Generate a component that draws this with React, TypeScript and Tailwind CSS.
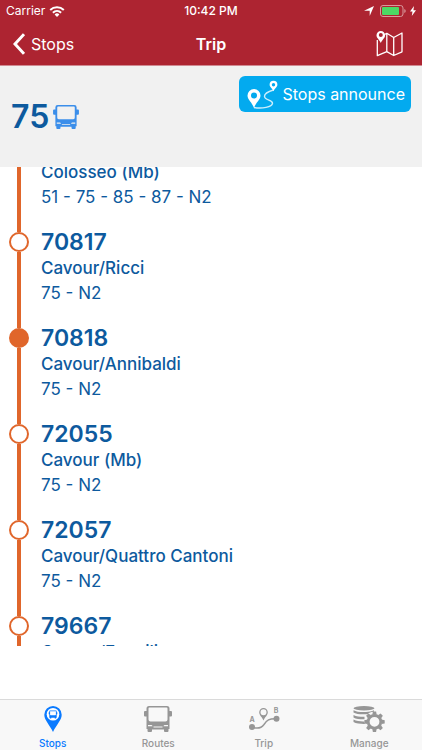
import { clsx } from "clsx";

const stops = [
  { name: "Colosseo (Mb)", lines: "51 - 75 - 85 - 87 - N2" },
  { code: "70817", name: "Cavour/Ricci", lines: "75 - N2" },
  { code: "70818", name: "Cavour/Annibaldi", lines: "75 - N2", current: true },
  { code: "72055", name: "Cavour (Mb)", lines: "75 - N2" },
  { code: "72057", name: "Cavour/Quattro Cantoni", lines: "75 - N2" },
  { code: "79667", name: "Cavour/Esquilino", lines: "75 - N2" },
];

const tabs = [
  { label: "Stops", Icon: StopsIcon, active: true },
  { label: "Routes", Icon: BusIcon },
  { label: "Trip", Icon: TripIcon },
  { label: "Manage", Icon: ManageIcon },
];

function BusIcon({ className = "h-[26px] w-7" }: { className?: string }) {
  return (
    <svg viewBox="0 0 28 26" className={className} fill="currentColor" aria-hidden="true">
      <path
        fillRule="evenodd"
        d="M5 0h18a2.500 2.500 0 0 1 2.500 2.500V5H27a1 1 0 0 1 1 1v3.500a1 1 0 0 1-1 1h-1.500V23H24.500v2a1 1 0 0 1-1 1h-2.500a1 1 0 0 1-1-1v-1.500H8V25a1 1 0 0 1-1 1H4.500a1 1 0 0 1-1-1v-2h-1V10.500H1a1 1 0 0 1-1-1V6a1 1 0 0 1 1-1h1.500V2.500A2.500 2.500 0 0 1 5 0ZM5.500 1.600a1 1 0 0 0-1 1V13.500a2 2 0 0 0 2 2h15a2 2 0 0 0 2-2V2.600a1 1 0 0 0-1-1ZM4 19v1.300h4.500c0-.8-.8-1.300-2-1.300Zm20 0v1.300h-4.500c0-.8.8-1.300 2-1.300ZM9.500 20.600v.9h9v-.9Z"
      />
    </svg>
  );
}

function StopsIcon() {
  return (
    <svg viewBox="0 0 18 26" className="h-[26px] w-[18px]" aria-hidden="true">
      <path fill="currentColor" d="M9 0a8.700 8.700 0 0 0-8.700 8.700C.3 14 5.500 18.500 9 26c3.500-7.500 8.700-12 8.700-17.300A8.700 8.700 0 0 0 9 0Z" />
      <circle cx="9" cy="8.300" r="6.300" fill="#fff" />
      <path
        fill="currentColor"
        fillRule="evenodd"
        d="M6 4.500h6q.7 0 .7.700v1h.6v2h-.6v3.500h-.6v.8h-1.400v-.8H7.300v.8H5.900v-.8h-.6V8.200h-.6v-2h.6v-1q0-.7.7-.7Zm.1.700v3.400q0 .6.600.6h4.600q.6 0 .6-.6V5.200Z"
      />
    </svg>
  );
}

function TripIcon() {
  return (
    <svg viewBox="0 0 32 26" className="h-[26px] w-8" aria-hidden="true">
      <path d="M4 21c5 2 9 1.500 12-2.500 3-4.300 5-6 12-5.800" fill="none" stroke="currentColor" strokeWidth="1.500" />
      <circle cx="4" cy="21" r="3" fill="currentColor" />
      <circle cx="28.500" cy="12.700" r="3" fill="currentColor" />
      <path
        fill="currentColor"
        fillRule="evenodd"
        d="M15.500 2a4.300 4.300 0 0 0-4.300 4.300c0 3 2.800 4.700 4.300 8.200 1.500-3.500 4.300-5.200 4.300-8.200A4.300 4.300 0 0 0 15.500 2Zm0 1.300a3 3 0 1 1 0 6 3 3 0 0 1 0-6Z"
      />
      <text x="4" y="16" textAnchor="middle" fontSize="7" fontWeight="700" fill="currentColor">A</text>
      <text x="28" y="7" textAnchor="middle" fontSize="7" fontWeight="700" fill="currentColor">B</text>
    </svg>
  );
}

function ManageIcon() {
  return (
    <svg viewBox="0 0 32 26" className="h-[26px] w-8" fill="currentColor" aria-hidden="true">
      <ellipse cx="11" cy="2.200" rx="10.500" ry="2.200" />
      <path d="M.5 4.200c3 1.700 8 2 12.500 1.700 3-.1 5.500-.6 8-1.600v1.400c-3-.1-5 .8-6.500 2.500C9 8.600 3 8.300.5 6.500Z" />
      <path d="M.5 8.900c3 1.500 7 2 11 1.900v2.500c-4 .1-8.500-.4-11-1.900Z" />
      <path d="M.5 13.600c3 1.500 7 2 10.500 1.900l1 2.500c-4 .1-9-.4-11.500-1.900Z" />
      <g transform="translate(21.500 15.800)">
        <circle r="6.300" fill="none" stroke="currentColor" strokeWidth="2.800" />
        {[0, 45, 90, 135, 180, 225, 270, 315].map((angle) => (
          <path key={angle} d="M-2.200-7 -1.600-10.200H1.600L2.200-7Z" transform={`rotate(${angle})`} />
        ))}
      </g>
    </svg>
  );
}

function WifiIcon() {
  return (
    <svg viewBox="0 0 16 11" className="h-[11px] w-4" aria-hidden="true">
      <g fill="none" stroke="currentColor" strokeWidth="2">
        <path d="M1.200 4a9.800 9.800 0 0 1 13.600 0" />
        <path d="M3.900 6.700a6 6 0 0 1 8.200 0" />
      </g>
      <path d="M8 11 5.600 8.500a3.400 3.400 0 0 1 4.800 0Z" fill="currentColor" />
    </svg>
  );
}

function MapIcon() {
  return (
    <svg viewBox="0 0 27 26" className="h-[26px] w-[27px]" fill="none" aria-hidden="true">
      <path
        d="M8.500 3.500 10.800 2.300l6.900 4.200L26 2v18.800l-8.300 3.700-6.900-3.900-9.500 4.100V9M10.800 2.300v18.300M17.700 6.500v18"
        stroke="currentColor"
        strokeWidth="1.300"
        strokeLinejoin="round"
      />
      <path
        fill="currentColor"
        fillRule="evenodd"
        d="M4.800 0A4.300 4.300 0 0 0 .5 4.300c0 2.800 2.800 4.200 4.300 7.700 1.500-3.500 4.300-4.900 4.300-7.700A4.300 4.300 0 0 0 4.800 0Zm0 2.100a2 2 0 1 1 0 4 2 2 0 0 1 0-4Z"
      />
    </svg>
  );
}

function AnnounceIcon() {
  return (
    <svg viewBox="0 0 31 29" className="h-[29px] w-[31px]" aria-hidden="true">
      <path
        d="M7 27.500c8 1.500 18-.5 18.500-4.200.4-3.600-8-2.600-8-7 0-3.300 4.500-5 9-6.300"
        fill="none"
        stroke="currentColor"
        strokeWidth="1.400"
        opacity=".8"
      />
      <path
        fill="currentColor"
        fillRule="evenodd"
        d="M7 9a6.500 6.500 0 0 0-6.500 6.500C.5 20 5 22 7 28c2-6 6.500-8 6.500-12.500A6.500 6.500 0 0 0 7 9Zm0 3.500a3 3 0 1 1 0 6 3 3 0 0 1 0-6Z"
      />
      <path
        fill="currentColor"
        fillRule="evenodd"
        d="M26.500.8a3.900 3.900 0 0 0-3.900 3.900c0 2.500 2.700 3.300 3.900 6.500 1.200-3.200 3.900-4 3.900-6.500A3.900 3.900 0 0 0 26.500.8Zm0 2.200a1.700 1.700 0 1 1 0 3.400 1.700 1.700 0 0 1 0-3.400Z"
      />
    </svg>
  );
}

function StatusBar() {
  return (
    <div className="grid h-[22px] grid-cols-3 items-center px-1.5 text-xs">
      <div className="flex items-center gap-1">
        <span>Carrier</span>
        <WifiIcon />
      </div>
      <span className="text-center font-medium">10:42 PM</span>
      <div className="flex items-center justify-end gap-1.5">
        <svg viewBox="0 0 10 10" className="size-2.5" fill="currentColor" aria-hidden="true">
          <path d="M10 0 5.700 10V4.700H0Z" />
        </svg>
        <div className="flex items-center gap-1">
          <svg viewBox="0 0 26 12" className="h-3 w-[26px]" aria-hidden="true">
            <rect x=".5" y=".5" width="22.500" height="11" rx="2.500" fill="none" stroke="#d99a9d" />
            <rect x="2" y="2" width="17" height="8" rx="1" fill="#4cd964" />
            <path d="M24.300 4v4q1.400-.7 1.400-2t-1.400-2Z" fill="#d99a9d" />
          </svg>
          <svg viewBox="0 0 6 10" className="h-2.5 w-1.5" fill="currentColor" aria-hidden="true">
            <path d="M4 0 0 5.600h2.500L1.800 10 6 4.200H3.400Z" />
          </svg>
        </div>
      </div>
    </div>
  );
}

export default function App() {
  return (
    <div className="flex h-screen flex-col bg-white font-['Inter',sans-serif]">
      <header className="border-b border-[#d08a92] bg-[#ad2431] text-white">
        <StatusBar />
        <div className="grid h-[43px] grid-cols-3 items-center px-[13px]">
          <a href="#stops" className="flex items-center gap-1.5 text-base">
            <svg viewBox="0 0 12 22" className="h-[22px] w-3" fill="none" stroke="currentColor" strokeWidth="3" aria-hidden="true">
              <path d="M11 1.200 2 11l9 9.800" />
            </svg>
            Stops
          </a>
          <h1 className="text-center text-base font-semibold">Trip</h1>
          <button aria-label="Map" className="justify-self-end pr-1.5">
            <MapIcon />
          </button>
        </div>
      </header>

      <section className="flex h-[101px] shrink-0 items-start justify-between bg-[#f1f1f1] px-[11px]">
        <h2 className="mt-[31px] flex items-center gap-1 text-[32px] leading-10 font-semibold text-[#0d5a9e]">
          75
          <BusIcon className="h-6 w-[26px] text-[#3b8eea]" />
        </h2>
        <button className="mt-[10px] flex h-9 items-center gap-1 rounded-md bg-[#03aaef] pr-1.5 pl-2 text-base text-white">
          <AnnounceIcon />
          Stops announce
        </button>
      </section>

      <main className="mb-[53px] min-h-0 flex-1 overflow-hidden text-[#0d5a9e]">
        <ol className="-mt-[35px]">
          {stops.map((stop) => (
            <li key={stop.name} className="flex h-24 gap-3 pl-[9px]">
              <div className="flex w-5 flex-col items-center">
                <div className="h-1 w-1 bg-[#e0662b]" />
                <div
                  className={clsx(
                    "size-5 rounded-full border-2 border-[#e0662b]",
                    stop.current && "bg-[#e0662b]"
                  )}
                />
                <div className="w-1 flex-1 bg-[#e0662b]" />
              </div>
              <div className="self-end pb-[18px]">
                {stop.code && (
                  <h3 className="text-[23px] leading-7 font-semibold">{stop.code}</h3>
                )}
                <p className="text-[17px] leading-6 font-medium">{stop.name}</p>
                <p className="text-[17px] leading-[26px]">{stop.lines}</p>
              </div>
            </li>
          ))}
        </ol>
      </main>

      <nav className="grid h-[51px] shrink-0 grid-cols-4 border-t border-[#dadada] bg-[#f8f8f8]">
        {tabs.map(({ label, Icon, active }) => (
          <a
            key={label}
            href={`#${label.toLowerCase()}`}
            className={clsx(
              "flex flex-col items-center gap-1 pt-1.5 text-[10px] leading-[14px] font-medium",
              active ? "text-[#0a7aff]" : "text-[#969696]"
            )}
          >
            <Icon />
            {label}
          </a>
        ))}
      </nav>
    </div>
  );
}
